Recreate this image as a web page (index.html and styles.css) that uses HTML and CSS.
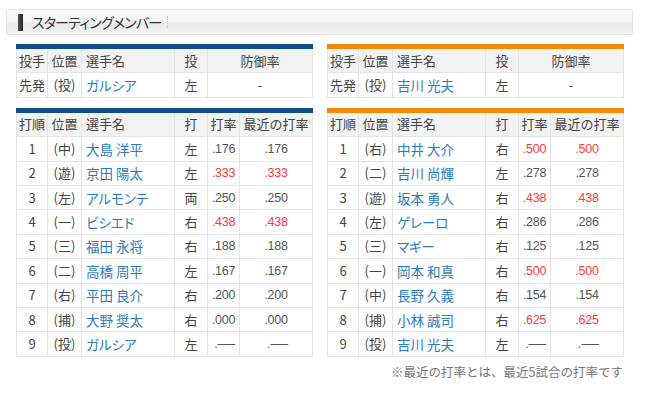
FILE: index.html
```html
<!DOCTYPE html>
<html lang="ja">
<head>
<meta charset="utf-8">
<link rel="stylesheet" href="styles.css">
</head>
<body>
<div class="page">
  <div class="titlebar">
    <span class="marker"></span>
    <span class="title">スターティングメンバー</span>
    <span class="dots"></span>
  </div>
  <div class="grid">
    <table class="tbl blue">
      <colgroup><col class="c1"><col class="c2"><col class="c3"><col class="c4"><col class="c56"></colgroup>
      <tr class="head"><th>投手</th><th>位置</th><th class="l">選手名</th><th>投</th><th>防御率</th></tr>
      <tr><td>先発</td><td>(投)</td><td class="name">ガルシア</td><td>左</td><td>-</td></tr>
    </table>
    <table class="tbl orange">
      <colgroup><col class="c1"><col class="c2"><col class="c3"><col class="c4"><col class="c56"></colgroup>
      <tr class="head"><th>投手</th><th>位置</th><th class="l">選手名</th><th>投</th><th>防御率</th></tr>
      <tr><td>先発</td><td>(投)</td><td class="name">吉川 光夫</td><td>左</td><td>-</td></tr>
    </table>

    <table class="tbl blue">
      <colgroup><col class="c1"><col class="c2"><col class="c3"><col class="c4"><col class="c5"><col class="c6"></colgroup>
      <tr class="head"><th>打順</th><th>位置</th><th class="l">選手名</th><th>打</th><th>打率</th><th>最近の打率</th></tr>
      <tr><td>1</td><td>(中)</td><td class="name">大島 洋平</td><td>左</td><td class="n">.176</td><td class="n">.176</td></tr>
      <tr><td>2</td><td>(遊)</td><td class="name">京田 陽太</td><td>左</td><td class="n red">.333</td><td class="n red">.333</td></tr>
      <tr><td>3</td><td>(左)</td><td class="name">アルモンテ</td><td>両</td><td class="n">.250</td><td class="n">.250</td></tr>
      <tr><td>4</td><td>(一)</td><td class="name">ビシエド</td><td>右</td><td class="n red">.438</td><td class="n red">.438</td></tr>
      <tr><td>5</td><td>(三)</td><td class="name">福田 永将</td><td>右</td><td class="n">.188</td><td class="n">.188</td></tr>
      <tr><td>6</td><td>(二)</td><td class="name">高橋 周平</td><td>左</td><td class="n">.167</td><td class="n">.167</td></tr>
      <tr><td>7</td><td>(右)</td><td class="name">平田 良介</td><td>右</td><td class="n">.200</td><td class="n">.200</td></tr>
      <tr><td>8</td><td>(捕)</td><td class="name">大野 奨太</td><td>右</td><td class="n">.000</td><td class="n">.000</td></tr>
      <tr><td>9</td><td>(投)</td><td class="name">ガルシア</td><td>左</td><td class="n">.<span class="dash">—</span></td><td class="n">.<span class="dash">—</span></td></tr>
    </table>
    <table class="tbl orange">
      <colgroup><col class="c1"><col class="c2"><col class="c3"><col class="c4"><col class="c5"><col class="c6"></colgroup>
      <tr class="head"><th>打順</th><th>位置</th><th class="l">選手名</th><th>打</th><th>打率</th><th>最近の打率</th></tr>
      <tr><td>1</td><td>(右)</td><td class="name">中井 大介</td><td>右</td><td class="n red">.500</td><td class="n red">.500</td></tr>
      <tr><td>2</td><td>(二)</td><td class="name">吉川 尚輝</td><td>左</td><td class="n">.278</td><td class="n">.278</td></tr>
      <tr><td>3</td><td>(遊)</td><td class="name">坂本 勇人</td><td>右</td><td class="n red">.438</td><td class="n red">.438</td></tr>
      <tr><td>4</td><td>(左)</td><td class="name">ゲレーロ</td><td>右</td><td class="n">.286</td><td class="n">.286</td></tr>
      <tr><td>5</td><td>(三)</td><td class="name">マギー</td><td>右</td><td class="n">.125</td><td class="n">.125</td></tr>
      <tr><td>6</td><td>(一)</td><td class="name">岡本 和真</td><td>右</td><td class="n red">.500</td><td class="n red">.500</td></tr>
      <tr><td>7</td><td>(中)</td><td class="name">長野 久義</td><td>右</td><td class="n">.154</td><td class="n">.154</td></tr>
      <tr><td>8</td><td>(捕)</td><td class="name">小林 誠司</td><td>右</td><td class="n red">.625</td><td class="n red">.625</td></tr>
      <tr><td>9</td><td>(投)</td><td class="name">吉川 光夫</td><td>左</td><td class="n">.<span class="dash">—</span></td><td class="n">.<span class="dash">—</span></td></tr>
    </table>
  </div>
  <p class="note">※最近の打率とは、最近5試合の打率です</p>
</div>
</body>
</html>
```

FILE: styles.css
```css
html, body {
  margin: 0;
  padding: 0;
  background: #fff;
}
body {
  font-family: "Noto Sans CJK JP", sans-serif;
  color: #444;
  font-size: 13px;
}
.page {
  width: 650px;
  padding-top: 9px;
}
.titlebar {
  margin-left: 6px;
  width: 625px;
  height: 24px;
  border: 1px solid #e2e2e2;
  border-radius: 2px;
  background: linear-gradient(to bottom, #fafafa 0%, #f3f3f3 45%, #e9e9e9 60%, #f3f3f3 100%);
  display: flex;
  align-items: center;
}
.marker {
  width: 5px;
  height: 17px;
  margin-left: 11px;
  background: linear-gradient(to right, #555, #222);
}
.title {
  margin-left: 9px;
  font-size: 14px;
  color: #333;
  font-feature-settings: "palt";
  letter-spacing: -0.8px;
}
.dots {
  margin-left: 6px;
  height: 12px;
  border-left: 1px dotted #bbb;
}
.grid {
  display: grid;
  grid-template-columns: 296px 296px;
  column-gap: 15px;
  row-gap: 10px;
  margin-left: 16px;
  margin-top: 9px;
  align-items: start;
}
.tbl {
  width: 296px;
  table-layout: fixed;
  border-collapse: collapse;
}
.tbl.blue { border-top: 5px solid #0f4c8a; }
.tbl.orange { border-top: 5px solid #f08a00; }
.c1 { width: 31px; }
.c2 { width: 34px; }
.c3 { width: 93px; }
.c4 { width: 33px; }
.c5 { width: 32px; }
.c6 { width: 73px; }
.c56 { width: 105px; }
.tbl th, .tbl td {
  border: 1px solid #e4e4e4;
  height: 23.4px;
  padding: 0;
  text-align: center;
  font-weight: normal;
  white-space: nowrap;
  line-height: 16px;
}
.tbl th {
  background: #f2f2f2;
  color: #444;
}
.tbl th.l { text-align: left; padding-left: 4px; }
.tbl td.name {
  text-align: left;
  padding-left: 4px;
  color: #2a7cbd;
  font-size: 13.5px;
  font-feature-settings: "palt";
}
.tbl td.n {
  font-family: "Liberation Sans", sans-serif;
  font-size: 12.5px;
  color: #555;
  letter-spacing: -0.3px;
}
.tbl td.n.red { color: #ff3b3b; }
.dash {
  display: inline-block;
  transform: scaleX(1.4);
  margin-left: 3px;
}
.note {
  margin: 5px 0 0;
  width: 623px;
  text-align: right;
  font-size: 12.5px;
  color: #777;
}
```
